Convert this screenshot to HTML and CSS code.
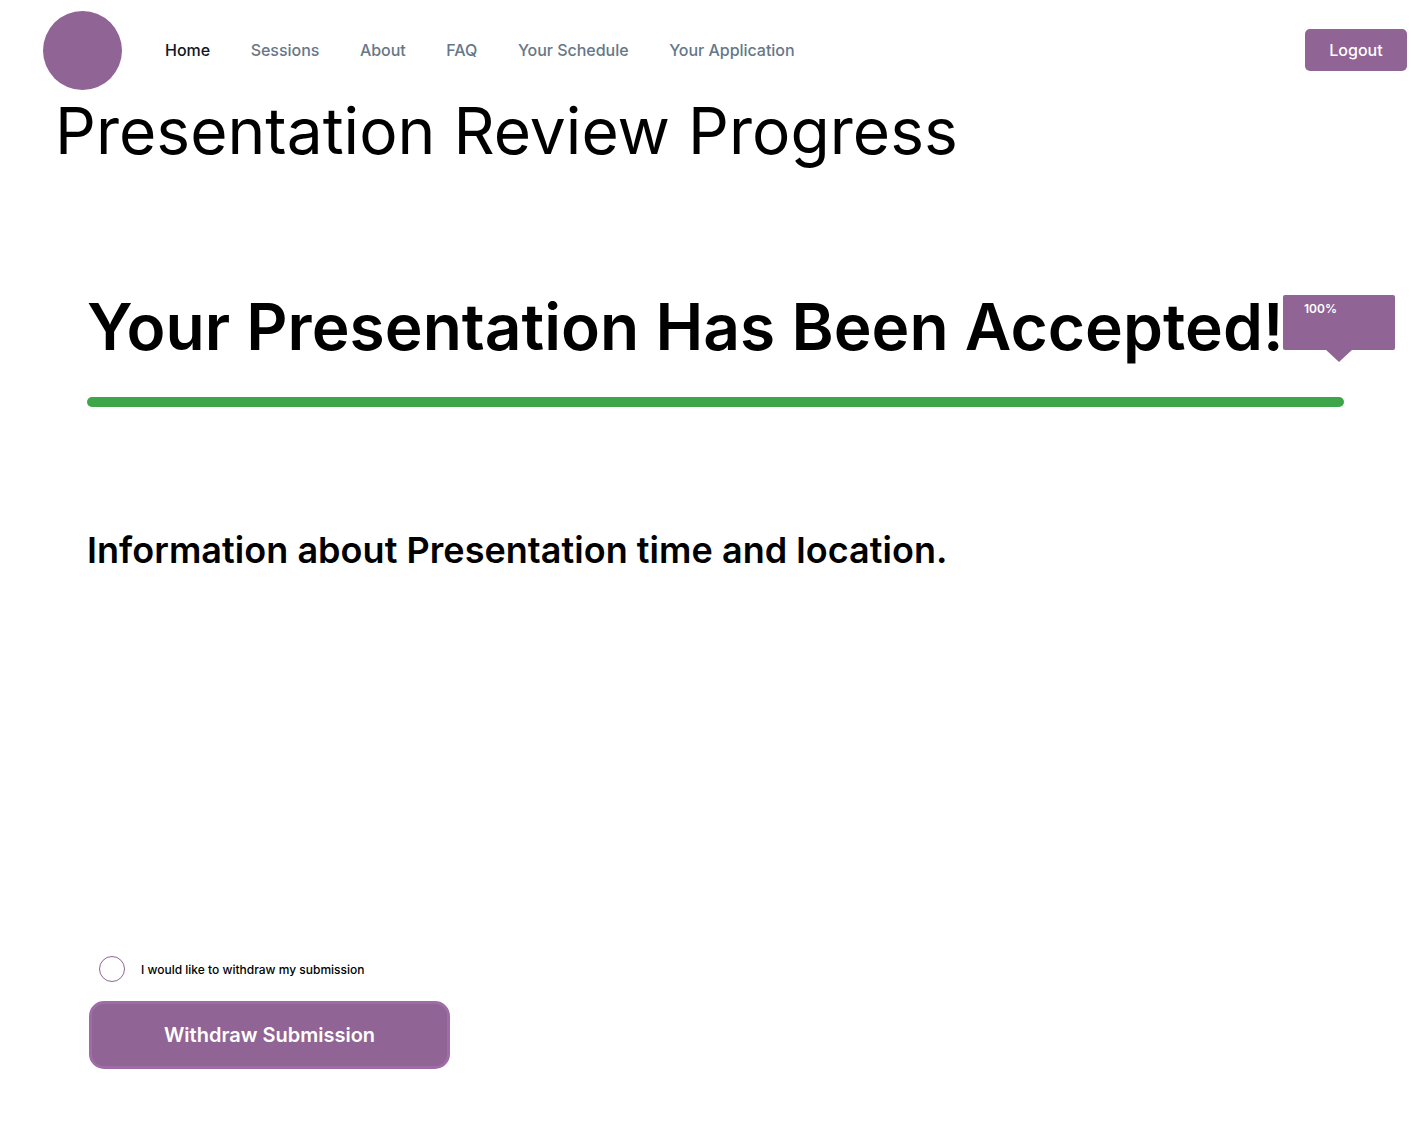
FILE: index.html
```html
<!DOCTYPE html>
<html lang="en">
<head>
<meta charset="utf-8">
<title>Presentation Review Progress</title>
<link rel="stylesheet" href="styles.css">
</head>
<body>
<header class="header">
  <div class="logo"></div>
  <nav class="nav">
    <a class="nav-link active">Home</a>
    <a class="nav-link">Sessions</a>
    <a class="nav-link">About</a>
    <a class="nav-link">FAQ</a>
    <a class="nav-link">Your Schedule</a>
    <a class="nav-link">Your Application</a>
  </nav>
  <button class="logout">Logout</button>
</header>
<main>
  <h1 class="title">Presentation Review Progress</h1>
  <section class="status">
    <h2 class="accepted">Your Presentation Has Been Accepted!</h2>
    <div class="tooltip"><div class="bubble">100%</div><div class="arrow"></div></div>
  </section>
  <div class="progress"></div>
  <h3 class="info">Information about Presentation time and location.</h3>
  <form class="withdraw">
    <label class="option"><span class="radio"></span><span>I would like to withdraw my submission</span></label>
    <button class="submit" type="button">Withdraw Submission</button>
  </form>
</main>
</body>
</html>
```

FILE: styles.css
```css
* { box-sizing: border-box; }
body { margin: 0; min-height: 1133px; background: #fff; color: #000; font-family: Inter, sans-serif; overflow: hidden; }
h1, h2, h3 { margin: 0; white-space: nowrap; }
button { border: 0; font-family: inherit; padding: 0; }
.header { display: flex; align-items: center; height: 100px; padding: 0 21px 0 43px; }
.logo { width: 79px; height: 79px; margin-top: 1px; border-radius: 50%; background: #906495; }
.nav { display: flex; gap: 40.6px; margin-left: 43px; flex: 1; }
.nav-link { color: #667788; font-size: 16px; font-weight: 500; line-height: 24px; letter-spacing: -0.03px; white-space: nowrap; }
.nav-link.active { color: #0f1728; }
.logout { width: 102px; height: 42px; border-radius: 5px; background: #906495; color: #fff; font-size: 16px; font-weight: 500; }
.title { margin: -9px 0 0 55px; font-size: 64px; font-weight: 400; line-height: 80px; letter-spacing: 0.04px; }
.status { display: flex; align-items: flex-start; height: 80px; margin: 116px 0 0 87px; }
.accepted { width: 1196px; font-size: 64px; font-weight: 600; line-height: 80px; letter-spacing: 0.05px; }
.tooltip { width: 112px; margin-top: 8px; }
.bubble { height: 55px; padding: 6px 0 0 21px; border-radius: 2px; background: #906495; color: #fff; font-size: 12px; font-weight: 600; line-height: 16px; }
.arrow { width: 28px; height: 13px; margin: -1px auto 0; background: #906495; clip-path: polygon(0 0, 100% 0, 50% 100%); }
.progress { width: 1257px; height: 10px; margin: 30px 0 0 87px; border-radius: 5px; background: #3da648; }
.info { margin: 119px 0 0 87px; font-size: 36px; font-weight: 600; line-height: 48px; letter-spacing: 0.04px; }
.withdraw { margin: 382px 0 0 89px; }
.option { display: flex; align-items: center; gap: 16px; height: 26px; margin-left: 10px; font-size: 12px; font-weight: 500; }
.radio { width: 26px; height: 26px; border: 1px solid #906495; border-radius: 50%; }
.submit { display: block; width: 361px; height: 68px; margin-top: 19px; border: 3px solid #a06ca8; border-radius: 15px; background: #906495; color: #fff; font-size: 20px; font-weight: 600; }
```
